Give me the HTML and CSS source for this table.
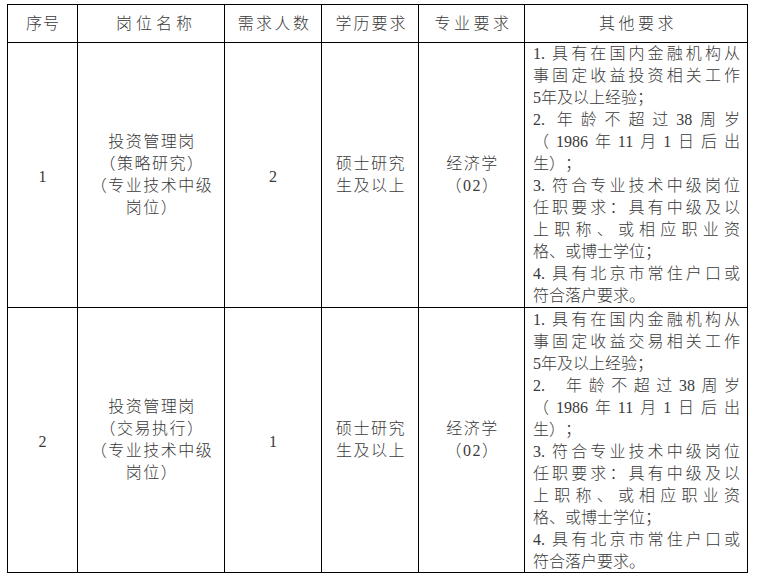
FILE: index.html
```html
<!DOCTYPE html>
<html lang="zh-CN">
<head>
<meta charset="utf-8">
<title>岗位需求</title>
<link rel="stylesheet" href="styles.css">
</head>
<body>
<div class="sheet">
  <div class="cell head h1">序号</div>
  <div class="cell head h2">岗位名称</div>
  <div class="cell head h3">需求人数</div>
  <div class="cell head h4">学历要求</div>
  <div class="cell head h5">专业要求</div>
  <div class="cell head h6">其他要求</div>

  <div class="cell num">1</div>
  <div class="cell mid"><span>投资管理岗</span><span>（策略研究）</span><span>（专业技术中级</span><span>岗位）</span></div>
  <div class="cell num">2</div>
  <div class="cell mid"><span>硕士研究</span><span>生及以上</span></div>
  <div class="cell mid"><span>经济学</span><span>（02）</span></div>
  <div class="cell req">
    <span class="ln j">1. 具有在国内金融机构从</span>
    <span class="ln j">事固定收益投资相关工作</span>
    <span class="ln">5年及以上经验；</span>
    <span class="ln j">2. 年龄不超过38周岁</span>
    <span class="ln j">（1986年11月1日后出</span>
    <span class="ln">生）；</span>
    <span class="ln j">3. 符合专业技术中级岗位</span>
    <span class="ln j">任职要求：具有中级及以</span>
    <span class="ln j">上职称、或相应职业资</span>
    <span class="ln">格、或博士学位；</span>
    <span class="ln j">4. 具有北京市常住户口或</span>
    <span class="ln">符合落户要求。</span>
  </div>

  <div class="cell num">2</div>
  <div class="cell mid"><span>投资管理岗</span><span>（交易执行）</span><span>（专业技术中级</span><span>岗位）</span></div>
  <div class="cell num">1</div>
  <div class="cell mid"><span>硕士研究</span><span>生及以上</span></div>
  <div class="cell mid"><span>经济学</span><span>（02）</span></div>
  <div class="cell req r2">
    <span class="ln j">1. 具有在国内金融机构从</span>
    <span class="ln j">事固定收益交易相关工作</span>
    <span class="ln">5年及以上经验；</span>
    <span class="ln j">2.&nbsp; 年龄不超过38周岁</span>
    <span class="ln j">（1986年11月1日后出</span>
    <span class="ln">生）；</span>
    <span class="ln j">3. 符合专业技术中级岗位</span>
    <span class="ln j">任职要求：具有中级及以</span>
    <span class="ln j">上职称、或相应职业资</span>
    <span class="ln">格、或博士学位；</span>
    <span class="ln j">4. 具有北京市常住户口或</span>
    <span class="ln">符合落户要求。</span>
  </div>
</div>
</body>
</html>
```

FILE: styles.css
```css
html, body {
  margin: 0;
  padding: 0;
  background: #fff;
}

body {
  font-family: "Liberation Serif", "Noto Sans CJK SC", serif;
  font-size: 16px;
  font-weight: 300;
  color: #3a3a3a;
  text-spacing-trim: space-all;
}

.sheet {
  display: grid;
  grid-template-columns: 69px 146px 96px 96px 105px 222px;
  grid-template-rows: 37px 264px 264px;
  gap: 1px;
  padding: 1px;
  background: #000;
  width: max-content;
  margin: 4px 0 0 7px;
}

.cell {
  background: #fff;
  display: flex;
  flex-direction: column;
  justify-content: center;
  align-items: center;
  text-align: center;
  line-height: 22px;
  min-width: 0;
}

.head {
  padding-top: 1px;
}

.h1 { letter-spacing: 1px; padding-left: 1px; }
.h2 { letter-spacing: 4px; padding-left: 10px; }
.h3 { letter-spacing: 2.4px; padding-left: 3px; }
.h4 { letter-spacing: 2px; padding-left: 3px; }
.h5 { letter-spacing: 3.5px; padding-left: 4px; }
.h6 { letter-spacing: 3.5px; padding-left: 4px; }

.num {
  padding-top: 4px;
}

.mid {
  letter-spacing: 1.5px;
  padding-left: 2px;
}

.mid span {
  display: block;
  white-space: nowrap;
}

.req {
  display: block;
  text-align: left;
  padding: 0 7px 0 8px;
  overflow: visible;
}

.r2 {
  padding-top: 1px;
}

.ln {
  display: block;
  white-space: nowrap;
  line-height: 22px;
}

.ln.j {
  white-space: normal;
  text-align: justify;
  text-align-last: justify;
}
```
